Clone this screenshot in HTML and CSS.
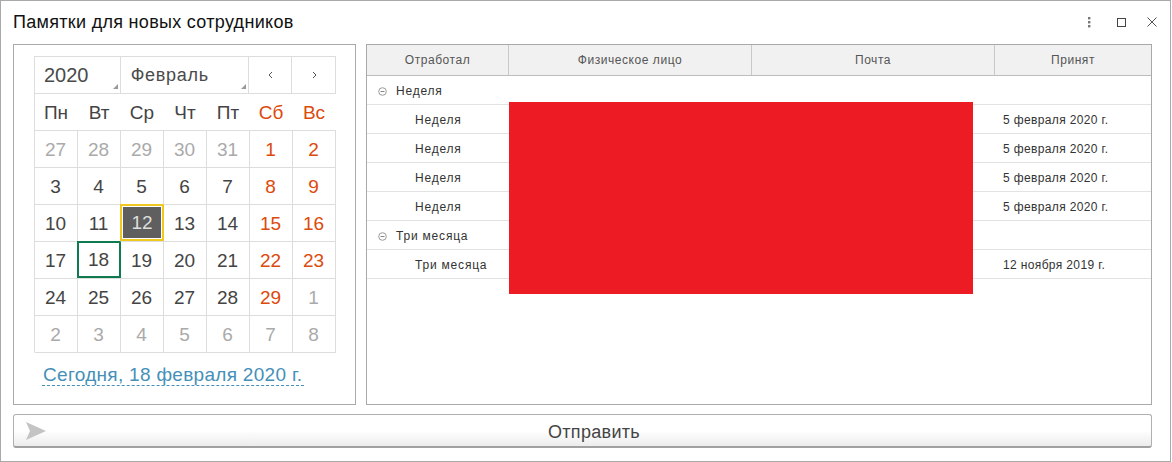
FILE: index.html
```html
<!DOCTYPE html>
<html lang="ru">
<head>
<meta charset="utf-8">
<title>Памятки для новых сотрудников</title>
<link rel="stylesheet" href="styles.css">
</head>
<body>
<div class="window">
  <header class="titlebar">
    <h1 class="title">Памятки для новых сотрудников</h1>
    <div class="win-actions">
      <svg class="win-icon" width="16" height="16" viewBox="0 0 16 16"><g fill="#777"><rect x="7" y="3" width="2.4" height="2.4"/><rect x="7" y="7" width="2.4" height="2.4"/><rect x="7" y="11" width="2.4" height="2.4"/></g></svg>
      <svg class="win-icon" width="16" height="16" viewBox="0 0 16 16"><rect x="4.5" y="4.5" width="8" height="8" fill="none" stroke="#444"/></svg>
      <svg class="win-icon" width="16" height="16" viewBox="0 0 16 16"><path d="M3.5 3.5l9 9M12.5 3.5l-9 9" fill="none" stroke="#555"/></svg>
    </div>
  </header>
  <main class="content">
    <section class="cal-panel">
      <div class="calendar">
        <div class="cal-head">
          <div class="cal-select year">2020</div>
          <div class="cal-select month">Февраль</div>
          <div class="cal-nav"><svg width="8" height="10" viewBox="0 0 8 10"><path d="M6 2L3 5l3 3" fill="none" stroke="#555"/></svg></div>
          <div class="cal-nav"><svg width="8" height="10" viewBox="0 0 8 10"><path d="M3 2l3 3-3 3" fill="none" stroke="#555"/></svg></div>
        </div>
        <div class="cal-grid">
          <div class="dow">Пн</div><div class="dow">Вт</div><div class="dow">Ср</div><div class="dow">Чт</div><div class="dow">Пт</div><div class="dow we">Сб</div><div class="dow we">Вс</div>
          <div class="day out">27</div><div class="day out">28</div><div class="day out">29</div><div class="day out">30</div><div class="day out">31</div><div class="day we">1</div><div class="day we">2</div>
          <div class="day">3</div><div class="day">4</div><div class="day">5</div><div class="day">6</div><div class="day">7</div><div class="day we">8</div><div class="day we">9</div>
          <div class="day">10</div><div class="day">11</div><div class="day selected"><span>12</span></div><div class="day">13</div><div class="day">14</div><div class="day we">15</div><div class="day we">16</div>
          <div class="day">17</div><div class="day today">18</div><div class="day">19</div><div class="day">20</div><div class="day">21</div><div class="day we">22</div><div class="day we">23</div>
          <div class="day">24</div><div class="day">25</div><div class="day">26</div><div class="day">27</div><div class="day">28</div><div class="day we">29</div><div class="day out">1</div>
          <div class="day out">2</div><div class="day out">3</div><div class="day out">4</div><div class="day out">5</div><div class="day out">6</div><div class="day out">7</div><div class="day out">8</div>
        </div>
        <a class="today-link">Сегодня, 18 февраля 2020 г.</a>
      </div>
    </section>
    <section class="list-panel">
      <div class="t-row t-header">
        <div class="th">Отработал</div><div class="th">Физическое лицо</div><div class="th">Почта</div><div class="th">Принят</div>
      </div>
      <div class="t-row group"><div class="td first"><svg class="collapse" width="9" height="9" viewBox="0 0 9 9"><circle cx="4.5" cy="4.5" r="3.8" fill="none" stroke="#999"/><path d="M2.5 4.5h4" stroke="#888"/></svg>Неделя</div></div>
      <div class="t-row"><div class="td sub">Неделя</div><div class="td"></div><div class="td"></div><div class="td date">5 февраля 2020 г.</div></div>
      <div class="t-row"><div class="td sub">Неделя</div><div class="td"></div><div class="td"></div><div class="td date">5 февраля 2020 г.</div></div>
      <div class="t-row"><div class="td sub">Неделя</div><div class="td"></div><div class="td"></div><div class="td date">5 февраля 2020 г.</div></div>
      <div class="t-row"><div class="td sub">Неделя</div><div class="td"></div><div class="td"></div><div class="td date">5 февраля 2020 г.</div></div>
      <div class="t-row group"><div class="td first"><svg class="collapse" width="9" height="9" viewBox="0 0 9 9"><circle cx="4.5" cy="4.5" r="3.8" fill="none" stroke="#999"/><path d="M2.5 4.5h4" stroke="#888"/></svg>Три месяца</div></div>
      <div class="t-row"><div class="td sub">Три месяца</div><div class="td"></div><div class="td"></div><div class="td date">12 ноября 2019 г.</div></div>
      <div class="redact"></div>
    </section>
  </main>
  <button class="send" type="button">
    <svg class="send-icon" width="22" height="18" viewBox="0 0 22 18"><path d="M1 0l20 9L1 18l4-9z" fill="#c4c4c4"/></svg>
    <span class="send-label">Отправить</span>
  </button>
</div>
</body>
</html>
```
FILE: styles.css
```css
* { box-sizing: border-box; }
html, body { margin: 0; padding: 0; background: #fff; }
body { font-family: "Liberation Sans", Arial, sans-serif; color: #333; }
.window {
  width: 1171px; height: 462px;
  border: 1px solid #a9a9a9;
  padding: 0 18px 0 12px;
  display: flex; flex-direction: column;
  background: #fff;
}
.titlebar { height: 43px; display: flex; align-items: center; justify-content: space-between; }
.title { margin: -1px 0 0; font-size: 18px; font-weight: 400; color: #111; letter-spacing: 0.3px; }
.win-actions { display: flex; gap: 15px; margin: -2px -8px 0 0; }
.win-actions .win-icon:first-child { margin-right: 1px; }
.content { display: flex; gap: 10px; height: 361px; }
.cal-panel { width: 343px; flex: none; border: 1px solid #a9a9a9; padding: 11px 20px 0; }
.calendar { width: 302px; }
.cal-head { display: flex; height: 37px; border: 1px solid #ddd; border-bottom: 0; }
.cal-select {
  height: 100%; display: flex; align-items: center;
  font-size: 20px; color: #4a4a4a; border-right: 1px solid #ddd; padding: 1px 0 0 9px; position: relative;
}
.cal-select::after {
  content: ""; position: absolute; right: 2px; bottom: 4px;
  border-left: 5px solid transparent; border-bottom: 5px solid #999;
}
.year { width: 86px; }
.month { width: 129px; font-size: 18px; letter-spacing: 0.7px; padding-left: 10px; }
.cal-nav { width: 43px; display: flex; align-items: center; justify-content: center; border-right: 1px solid #ddd; }
.cal-nav:last-child { border-right: 0; }
.cal-grid {
  display: grid; grid-template-columns: repeat(7, 43px); grid-auto-rows: 37px;
  border-left: 1px solid #ddd; width: 302px;
}
.dow, .day {
  display: flex; align-items: center; justify-content: center;
  font-size: 19px; color: #444;
  border-top: 1px solid #ddd;
  margin-left: -1px;
  padding: 1px 1px 0 0;
  border-left: 1px solid transparent;
}
.day { border-right: 1px solid #ddd; }
.day:nth-last-child(-n+7) { border-bottom: 1px solid #ddd; height: 38px; }
.dow.we, .day.we { color: #dc4a0c; }
.day.out { color: #aaa; }
.day.selected { border: 2px solid #f0c820; padding: 1px; background: #fff; }
.day.selected span { width: 100%; height: 100%; display: flex; align-items: center; justify-content: center; background: #5f5f5f; color: #ddd; }
.day.today { border: 2px solid #0f7a50; }
.today-link {
  display: inline-block; margin: 11px 0 0 8px; font-size: 19px; color: #4590b8; letter-spacing: 0.3px;
  border-bottom: 1px dashed #4590b8; line-height: 20px; padding: 2px 2px 0 1px;
}
.list-panel { position: relative; width: 786px; flex: none; border: 1px solid #a9a9a9; }
.t-row {
  display: grid; grid-template-columns: 142px 243px 243px 156px; height: 29px;
  border-bottom: 1px solid #e2e2e2;
}
.t-header { height: 31px; background: #f1f1f1; border-bottom: 1px solid #bdbdbd; }
.th {
  display: flex; align-items: center; justify-content: center;
  font-size: 12px; color: #555; letter-spacing: 0.55px; border-right: 1px solid #c9c9c9;
}
.th:last-child { border-right: 0; }
.td { display: flex; align-items: center; font-size: 12px; color: #333; letter-spacing: 0.8px; padding-top: 2px; }
.td.first { padding-left: 11px; }
.td.sub { padding-left: 48px; }
.td.date { padding-left: 8px; letter-spacing: 0.36px; }
.collapse { margin-right: 9px; }
.redact { position: absolute; left: 142px; top: 57px; width: 464px; height: 192px; background: #ed1c24; }
.send {
  display: flex; align-items: center; margin-top: 9px; width: 1139px; height: 34px;
  border: 1px solid #b0b0b0; border-bottom: 2px solid #a0a0a0; border-radius: 3px;
  background: linear-gradient(#fff 50%, #ececec);
  font-family: inherit; font-size: 18px; color: #444; letter-spacing: 0.3px; padding: 0 10px 0 11px;
}
.send-icon { flex: none; }
.send-label { flex: 1; text-align: center; padding-top: 3px; }
```
